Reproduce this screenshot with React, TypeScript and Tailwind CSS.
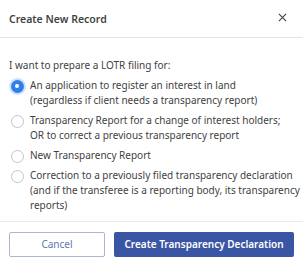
import React, { useState } from "react";

const options = [
  ["An application to register an interest in land", "(regardless if client needs a transparency report)"],
  ["Transparency Report for a change of interest holders;", "OR to correct a previous transparency report"],
  ["New Transparency Report"],
  [
    "Correction to a previously filed transparency declaration",
    "(and if the transferee is a reporting body, its transparency",
    "reports)",
  ],
];

export default function App() {
  const [selected, setSelected] = useState(0);

  return (
    <div
      className="w-[303px] h-[266px] bg-white text-[#3f3f3f] flex flex-col"
      style={{ fontFamily: '"Noto Sans", "Open Sans", sans-serif' }}
    >
      {/* header */}
      <div className="h-[38px] flex items-center justify-between pl-[9px] pr-[16px] pt-[2px] border-b border-[#e3e3e3]">
        <span className="text-[10.5px] font-semibold text-[#444]">Create New Record</span>
        <svg width="9" height="9" viewBox="0 0 10 10" className="text-[#444] -mt-[4px]">
          <path d="M1 1L9 9M9 1L1 9" stroke="currentColor" strokeWidth="1.3" />
        </svg>
      </div>

      {/* body */}
      <div className="flex-1 px-[9px] pt-[20px] border-b border-[#e6e9ee]">
        <p className="text-[10px] leading-[15px] mb-[5px]">I want to prepare a LOTR filing for:</p>
        <div className="flex flex-col gap-[5px]">
          {options.map((lines, i) => (
            <label key={i} className="flex items-start gap-[6px] cursor-pointer" onClick={() => setSelected(i)}>
              <span className="w-[14px] h-[14px] mt-[1px] ml-[1px] shrink-0 flex items-center justify-center">
                {selected === i ? (
                  <span className="w-[13px] h-[13px] rounded-full bg-[#2f7ee9] ring-[2px] ring-[#cfe2fc] flex items-center justify-center">
                    <span className="w-[4px] h-[4px] rounded-full bg-white" />
                  </span>
                ) : (
                  <span className="w-[13px] h-[13px] rounded-full border border-[#c4c4c4] bg-white" />
                )}
              </span>
              <span className="text-[10px] leading-[15px] text-[#3f3f3f] whitespace-nowrap">
                {lines.map((l, j) => (
                  <span key={j} className="block">{l}</span>
                ))}
              </span>
            </label>
          ))}
        </div>
      </div>

      {/* footer */}
      <div className="h-[44px] flex items-start gap-[9px] px-[9px] pt-[10px]">
        <button className="w-[96px] h-[25px] border border-[#aab6d6] rounded-[2px] text-[10px] text-[#6176b0] bg-white">
          Cancel
        </button>
        <button className="flex-1 h-[25px] rounded-[2px] bg-[#3a55a4] text-white text-[10px] font-semibold">
          Create Transparency Declaration
        </button>
      </div>
    </div>
  );
}
